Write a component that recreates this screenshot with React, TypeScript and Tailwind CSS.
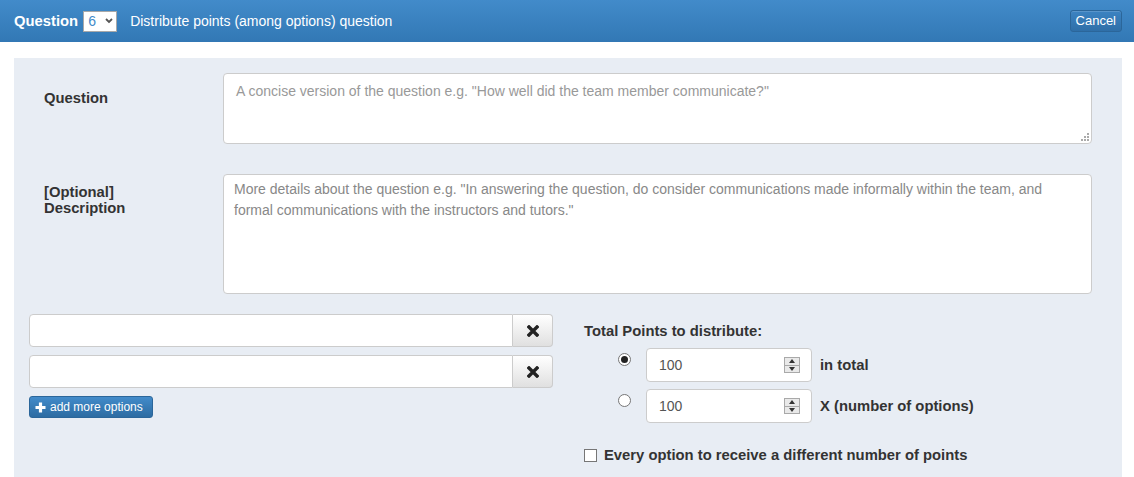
import React from 'react';

const font = { fontFamily: '"Liberation Sans", Arial, Helvetica, sans-serif' };

function RemoveIcon() {
  return (
    <svg width="12" height="12" viewBox="0 0 12 12">
      <path d="M2 2 L10 10 M10 2 L2 10" stroke="#222" strokeWidth="3.4" strokeLinecap="square" />
    </svg>
  );
}

function PlusIcon() {
  return (
    <svg width="11" height="11" viewBox="0 0 11 11">
      <path d="M5.5 0.5 V10.5 M0.5 5.5 H10.5" stroke="#fff" strokeWidth="3.2" />
    </svg>
  );
}

function Spinner() {
  return (
    <div className="flex h-[16px] w-[16px] flex-col border border-[#a9a9a9] bg-[#e9e9e9]">
      <div className="flex flex-1 items-center justify-center border-b border-[#a9a9a9]">
        <svg width="6" height="4" viewBox="0 0 6 4">
          <path d="M0 4 L3 0 L6 4 Z" fill="#333" />
        </svg>
      </div>
      <div className="flex flex-1 items-center justify-center">
        <svg width="6" height="4" viewBox="0 0 6 4">
          <path d="M0 0 L3 4 L6 0 Z" fill="#333" />
        </svg>
      </div>
    </div>
  );
}

function OptionRow() {
  return (
    <div className="flex h-[33px] w-[524px]">
      <input
        type="text"
        className="h-full flex-1 rounded-l-[4px] border border-[#ccc] bg-white px-3 outline-none"
      />
      <button className="flex h-full w-[40px] items-center justify-center rounded-r-[4px] border border-l-0 border-[#ccc] bg-gradient-to-b from-white to-[#e0e0e0]">
        <RemoveIcon />
      </button>
    </div>
  );
}

function PointsRow({ checked, label }: { checked: boolean; label: string }) {
  return (
    <div className="flex h-[34px] items-start">
      <div className="ml-[34px] mt-[5px] flex h-[13px] w-[13px] items-center justify-center rounded-full border border-[#767676] bg-white">
        {checked && <div className="h-[7px] w-[7px] rounded-full bg-[#222]" />}
      </div>
      <div className="ml-[15px] flex h-[34px] w-[166px] items-center rounded-[4px] border border-[#ccc] bg-white pl-[12px] pr-[11px]">
        <span className="flex-1 text-[14px] text-[#555]">100</span>
        <Spinner />
      </div>
      <span className="ml-[8px] self-center text-[14.8px] font-bold text-[#333]">{label}</span>
    </div>
  );
}

export default function App() {
  return (
    <div className="h-[477px] w-[1134px] overflow-hidden bg-white" style={font}>
      <div className="flex h-[42px] items-center bg-gradient-to-b from-[#428bca] to-[#3278b5] pl-[14px] pr-[12px] text-white">
        <span className="text-[14.8px] font-bold">Question</span>
        <div className="ml-[5px] flex h-[21px] w-[34px] items-center justify-between border border-[#a9a9a9] bg-white pl-[4px] pr-[3px]">
          <span className="text-[14px] text-[#428bca]">6</span>
          <svg width="8" height="6" viewBox="0 0 8 6">
            <path d="M1 1 L4 4 L7 1" stroke="#555" strokeWidth="1.8" fill="none" />
          </svg>
        </div>
        <span className="ml-[13px] text-[14px]">Distribute points (among options) question</span>
        <button className="ml-auto h-[22px] rounded-[3px] border border-[#2b669a] bg-gradient-to-b from-[#3c83c2] to-[#2f6fa8] px-[5px] text-[13px] text-white shadow-[inset_0_1px_0_rgba(255,255,255,0.15)]">
          Cancel
        </button>
      </div>

      <div className="ml-[14px] mt-[16px] h-[419px] w-[1108px] bg-[#e8edf4] pt-[15px]">
        <div className="flex">
          <label className="w-[209px] pl-[30px] pt-[14px] text-[14.8px] font-bold text-[#333]">Question</label>
          <div className="relative">
            <textarea
              className="block h-[71px] w-[869px] resize-none rounded-[4px] border border-[#ccc] bg-white px-[12px] py-[7px] text-[14px] leading-[20px] text-[#555] outline-none placeholder:text-[#999]"
              placeholder={'A concise version of the question e.g. "How well did the team member communicate?"'}
            />
            <svg className="absolute bottom-[3px] right-[3px]" width="8" height="8" viewBox="0 0 8 8">
              <rect x="6" y="0" width="2" height="2" fill="#aaa" />
              <rect x="3" y="3" width="2" height="2" fill="#aaa" />
              <rect x="6" y="3" width="2" height="2" fill="#aaa" />
              <rect x="0" y="6" width="2" height="2" fill="#aaa" />
              <rect x="3" y="6" width="2" height="2" fill="#aaa" />
              <rect x="6" y="6" width="2" height="2" fill="#aaa" />
            </svg>
          </div>
        </div>

        <div className="mt-[30px] flex">
          <label className="w-[209px] pl-[30px] pt-[10px] text-[14.8px] font-bold leading-[16px] text-[#333]">
            [Optional]
            <br />
            Description
          </label>
          <textarea
            className="block h-[120px] w-[869px] resize-none rounded-[4px] border border-[#ccc] bg-white px-[10px] py-[4px] text-[14px] leading-[21px] text-[#555] outline-none placeholder:text-[#888]"
            placeholder={
              'More details about the question e.g. "In answering the question, do consider communications made informally within the team, and formal communications with the instructors and tutors."'
            }
          />
        </div>

        <div className="mt-[20px] flex pl-[15px]">
          <div className="flex w-[555px] flex-col">
            <div className="flex flex-col gap-[8px]">
              <OptionRow />
              <OptionRow />
            </div>
            <button className="mt-[8px] flex h-[22px] w-[124px] items-center gap-[4px] rounded-[3px] border border-[#2b669a] bg-gradient-to-b from-[#428bca] to-[#2d6ca2] pl-[5px] text-[12px] text-white">
              <PlusIcon />
              add more options
            </button>
          </div>

          <div className="flex flex-col">
            <div className="mt-[6px] text-[14.8px] font-bold text-[#333]">Total Points to distribute:</div>
            <div className="mt-[6px] flex flex-col gap-[7px]">
              <PointsRow checked label="in total" />
              <PointsRow checked={false} label="X (number of options)" />
            </div>
            <div className="mt-[21px] flex items-center">
              <div className="h-[13px] w-[13px] border border-[#767676] bg-white" />
              <span className="ml-[7px] text-[14.8px] font-bold text-[#333]">
                Every option to receive a different number of points
              </span>
            </div>
          </div>
        </div>
      </div>
    </div>
  );
}
